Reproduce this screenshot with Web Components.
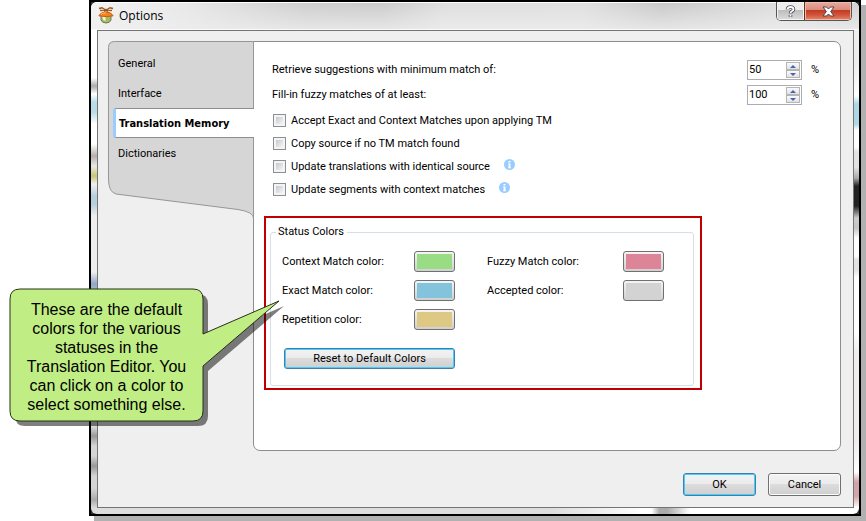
<!DOCTYPE html>
<html lang="en">
<head>
<meta charset="utf-8">
<title>Options</title>
<style>
  html { height: 100%; }
  body {
    margin: 0; min-height: 100%; display: flex; position: relative; background: #fff; color: #000;
    font: 11px/16px Roboto, "Open Sans", sans-serif;
  }
</style>
</head>
<body>
<options-window>
  <side-tabs slot="nav"></side-tabs>
  <memory-panel slot="panel"></memory-panel>
  <push-button slot="actions" primary>OK</push-button>
  <push-button slot="actions">Cancel</push-button>
</options-window>
<call-out>These are the default<br>colors for the various<br>statuses in the<br>Translation Editor. You<br>can click on a color to<br>select something else.</call-out>

<script>
const define = (name, html, setup) => customElements.define(name, class extends HTMLElement {
  connectedCallback() {
    if (this.shadowRoot) return;
    const t = document.createElement('template');
    t.innerHTML = typeof html === 'function' ? html(this) : html;
    this.attachShadow({ mode: 'open' }).append(t.content.cloneNode(true));
    if (setup) setup(this.shadowRoot, this);
  }
});

define('app-logo', `
<style>:host{display:block;width:16px;height:17px} svg{display:block}</style>
<svg width="16" height="17" viewBox="0 0 16 17" aria-hidden="true">
  <path d="M3 8.500h10v4.500q-1 3-5 3t-5-3z" fill="#a5bd58" stroke="#77746a"/>
  <path d="M4.500 9h3v5q-3-1-3-3z" fill="#f3f6df"/>
  <path d="M.8 8.800Q3 5 8 4.800q5 .2 7.200 4Q8 10.500 .8 8.800z" fill="#f58220" stroke="#c85e10"/>
  <path d="M3 7.500q2-2 5-1.700" stroke="#ffc27d" fill="none"/>
  <path d="M1 1.500l3-.7 4 2.400 4-2.400 3 .7M2 3.500l6-.3 6 .3M6 4.500l2-2 2 2" fill="none" stroke="#9a5722" stroke-width="1.300"/>
  <path d="M3 2.300l2.500.5M13 2.300l-2.500.5" stroke="#f4d9ae"/>
</svg>`);

define('options-window', `
<style>
  :host{flex:1;min-width:0;margin:0 5px 5px 89px;box-sizing:border-box;display:flex;
    border:2px solid #000;background:#333;box-shadow:5px 5px 0 #b1b1b1}
  .frame{flex:1;min-width:0;display:flex;flex-direction:column;padding:0 5px 6px 6px;border-radius:6px;
    background:
      linear-gradient(#eee 0 62px,#fff 94px,#aed6e4 102px 122px,#fff 128px 145px,#e4e2e2 150px 165px,#aaa 176px,#222 184px 204px,#ccc 216px,#c4c4c4 226px,#fff 236px 254px,#e2e2e2 258px 268px,#fff 276px 330px,#efeded 350px 440px,#fff 470px,#d3a3aa 480px 494px,#fff 506px) right/5px 100% no-repeat,
      linear-gradient(#fff 0 76px,#aaa 84px,#fff 92px,#b9dce7 100px 110px,#fff 122px 142px,#b8adad 154px,#e9e9e9 164px,#c6c673 174px,#f0f0f0 182px,#b5cfdc 194px 202px,#eee 214px 270px,#91a5c8 282px,#ddd 300px 424px,#999 434px,#d5d5d5 444px 454px,#999 464px,#d5d5d5 474px 486px,#aaa 498px,#dcdcdc 506px) left/6px 100% no-repeat,
      linear-gradient(90deg,#ddd 0 60%,#fff 72% 73%,#aaa 74% 75%,#fff 78%) bottom/100% 6px no-repeat,#eee;}
  header{display:flex;align-items:flex-start;height:28px;margin:0 -5px 0 -6px;padding:0 7px;border-radius:6px 6px 0 0;
    background:linear-gradient(#fff 0 1px,transparent 1px 27px,#fafafa 27px),
      linear-gradient(#fff0 0,#eeeeee66 50%,#eeeeeecc 100%),
      linear-gradient(100deg,#f3f3f3 0,#e8e8e8 12%,#cdcdcd 28%,#cbcbcb 38%,#dedede 46%,#dfdfdf 64%,#c8c8c8 74%,#dedede 90%,#d0d0d0)}
  app-logo{margin-top:5px}
  h1{flex:1;margin:5px 0 0 5px;font:12px/17px "Open Sans","Noto Sans",sans-serif}
  .caption{display:flex;height:18px;border:1px solid #555;border-top:0;border-radius:0 0 5px 5px;overflow:hidden}
  .caption button{margin:0;padding:0;border:0;display:grid;place-items:center}
  .help{width:27px;background:linear-gradient(#ededed 0 8px,#bcbcbc 8px,#ddd);box-shadow:inset 0 0 0 1px #f5f5f5}
  .close{width:47px;border-left:1px solid #6b2a20!important;background:linear-gradient(#e9aa9d 0,#d98b7d 8px,#bf3a22 8px,#d4543a 13px,#e08a6c);box-shadow:inset 0 0 0 1px #f0b9a9}
  .client{flex:1;display:flex;flex-direction:column;border:1px solid #747474;background:#efefef;padding:10px 12px 11px 10px}
  .body{flex:1;display:grid;grid-template-columns:146px minmax(0,1fr)}
  footer{display:flex;justify-content:flex-end;gap:12px;margin-top:22px}
</style>
<div class="frame">
  <header><app-logo></app-logo><h1>Options</h1>
    <div class="caption">
      <button class="help" aria-label="Help"><svg width="11" height="13" viewBox="0 0 11 13"><path d="M2.500 4.500Q2.500 2 5.500 2T8.500 4.500Q8.500 5.500 6.800 6.300Q5.500 7 5.500 8.500M5.500 10v1.800" fill="none" stroke="#4b4e5b" stroke-width="3.600"/><path d="M2.500 4.500Q2.500 2 5.500 2T8.500 4.500Q8.500 5.500 6.800 6.300Q5.500 7 5.500 8.300M5.500 10v1.500" fill="none" stroke="#fff" stroke-width="1.800"/></svg></button>
      <button class="close" aria-label="Close"><svg width="13" height="11" viewBox="0 0 13 11"><path d="M1 1h3.500l2 2 2-2H12L8.700 5.500 12 10H8.500l-2-2-2 2H1l3.300-4.500z" fill="#fff" stroke="#51434c"/></svg></button>
    </div>
  </header>
  <div class="client">
    <div class="body"><slot name="nav"></slot><slot name="panel"></slot></div>
    <footer><slot name="actions"></slot></footer>
  </div>
</div>`);

define('side-tabs', `
<style>
  :host{display:block;position:relative;z-index:1;align-self:start}
  svg{position:absolute;inset:0;width:100%;height:100%}
  nav{position:relative;display:flex;flex-direction:column;padding:7px 0 50px 5px}
  button{all:unset;box-sizing:border-box;height:30px;padding-left:5px;line-height:32px;cursor:pointer}
  button[aria-selected=true]{background:#fff;border:1px solid #8e8e8e;border-right:0;border-left:3px solid #99ccff;
    border-radius:3px 0 0 3px;padding-left:3px;font-family:"DejaVu Sans Condensed","DejaVu Sans",sans-serif;font-weight:bold;line-height:30px}
</style>
<svg viewBox="0 0 146 177" preserveAspectRatio="none" aria-hidden="true">
  <path d="M145.500 .5H6.500Q.5 .5 .5 6.500V138Q.5 151 8 153L130 168.500Q145.500 171 145.500 177z" fill="#d6d6d6" stroke="#969696"/>
</svg>
<nav role="tablist">
  <button role="tab">General</button><button role="tab">Interface</button>
  <button role="tab" aria-selected="true">Translation Memory</button><button role="tab">Dictionaries</button>
</nav>`);

define('spin-field', el => `
<style>
  :host{display:flex;align-items:center}
  label{flex:1}
  .box{box-sizing:border-box;display:flex;width:55px;height:20px;border:1px solid #abadb3;background:#fff}
  input{flex:1;min-width:0;border:0;padding:0 0 0 1px;margin:0;font:inherit;background:none;color:inherit;outline:0;appearance:textfield;-moz-appearance:textfield}
  input::-webkit-inner-spin-button{appearance:none;margin:0}
  .arrows{display:grid;grid-template-rows:1fr 1fr;width:14px;margin:1px}
  .arrows button{margin:0;padding:0;border:1px solid #b5b5b5;background:linear-gradient(#fafafa,#e2e2e2);display:grid;place-items:center}
  .arrows svg{display:block}
  .unit{width:11px;padding-left:9px}
</style>
<label for="n">${el.getAttribute('label')}</label>
<div class="box"><input id="n" type="number" value="${el.getAttribute('value')}">
  <div class="arrows">
    <button aria-label="Increase"><svg width="6" height="3"><path d="M0 3L3 0 6 3z" fill="#4a62b5"/></svg></button>
    <button aria-label="Decrease"><svg width="6" height="3"><path d="M0 0L3 3 6 0z" fill="#4a62b5"/></svg></button>
  </div></div>
<span class="unit">%</span>`);

define('check-field', el => `
<style>
  :host{display:flex;align-items:flex-start;height:16px}
  input{appearance:none;box-sizing:border-box;margin:1px 5px 0 1px;width:13px;height:13px;border:1px solid #8e8f8f;
    background:linear-gradient(135deg,#c5cad1,#f4f4f4) content-box,#f4f4f4;padding:2px}
  svg{margin:0 0 0 14px}
</style>
<input id="c" type="checkbox"><label for="c"><slot></slot></label>
${el.hasAttribute('info') ? '<svg width="11" height="11" viewBox="0 0 11 11" role="img" aria-label="Information"><circle cx="5.500" cy="5.500" r="5.500" fill="#99ccff"/><path d="M4.500 2h2v1.500h-2zM4 4.500h2.500v4H7v.8H4v-.8h.6V5.300H4z" fill="#fff"/></svg>' : ''}`);

define('color-field', el => `
<style>
  :host{display:flex;align-items:center;justify-content:space-between}
  input{appearance:none;box-sizing:border-box;display:block;width:41px;height:21px;margin:0;padding:1px;border:1px solid #707070;border-radius:3px;background:linear-gradient(#f5f5f5,#d0d0d0)}
  input::-webkit-color-swatch-wrapper{padding:1px}
  input::-webkit-color-swatch{border:0;border-radius:0}
</style>
<label for="c">${el.getAttribute('label')}</label><input id="c" type="color" value="${el.getAttribute('value')}">`);

define('push-button', `
<style>
  :host{display:block;width:73px}
  :host([wide]){width:171px}
  button{box-sizing:border-box;display:block;width:100%;height:23px;margin:0;padding:0;border:1px solid #707070;border-radius:3px;
    color:inherit;font:inherit;background:linear-gradient(#f3f3f3,#ebebeb 50%,#dcdcdc 50%,#cfcfcf);box-shadow:inset 0 0 0 1px #fbfbfb}
  :host([primary]) button{border-color:#3c7fb1;box-shadow:inset 0 0 0 1px #48cdf6}
  :host([wide]) button{height:21px}
</style>
<button><slot></slot></button>`);

define('status-colors', `
<style>
  :host{display:block;border:2px solid #c00000;padding:6px 6px 2px 4px}
  fieldset{min-width:0;margin:0;padding:11px 11px 16px;border:1px solid #d5dfe5;border-radius:3px}
  legend{margin-left:-6px;padding:0 3px 0 2px;line-height:16px}
  .grid{display:grid;grid-template-columns:173px 177px;gap:8px 32px}
  push-button{margin-top:18px;margin-left:2px}
</style>
<fieldset><legend>Status Colors</legend>
  <div class="grid">
    <color-field label="Context Match color:" value="#98dd84"></color-field>
    <color-field label="Fuzzy Match color:" value="#dd8499"></color-field>
    <color-field label="Exact Match color:" value="#84c3dc"></color-field>
    <color-field label="Accepted color:" value="#d3d3d3"></color-field>
    <color-field label="Repetition color:" value="#ddc884"></color-field>
  </div>
  <push-button wide primary>Reset to Default Colors</push-button>
</fieldset>`);

define('memory-panel', `
<style>
  :host{display:block;margin-left:-1px;border:1px solid #8e8e8e;border-radius:0 7px 7px 7px;background:#fff;padding:18px 10px}
  .spins{display:grid;gap:5px;margin:0 8px}
  .checks{display:grid;gap:7px;margin:8px 8px 0}
  status-colors{margin:18px 128px 0 0}
</style>
<div class="spins">
  <spin-field label="Retrieve suggestions with minimum match of:" value="50"></spin-field>
  <spin-field label="Fill-in fuzzy matches of at least:" value="100"></spin-field>
</div>
<div class="checks">
  <check-field>Accept Exact and Context Matches upon applying TM</check-field>
  <check-field>Copy source if no TM match found</check-field>
  <check-field info>Update translations with identical source</check-field>
  <check-field info>Update segments with context matches</check-field>
</div>
<status-colors></status-colors>`);

define('call-out', `
<style>
  :host{position:absolute;left:9px;top:288px;z-index:5;width:195px;font:16px/19px "Liberation Sans",Arial,sans-serif;text-align:center}
  svg{position:absolute;left:0;top:0;overflow:visible}
  p{position:relative;margin:0;padding:12px 0}
</style>
<svg width="276" height="139" viewBox="0 0 276 139" aria-hidden="true">
  <defs><path id="b" d="M11 1H184Q194 1 194 11V46L270 13 194 78V123Q194 133 184 133H11Q1 133 1 123V11Q1 1 11 1z"/></defs>
  <use href="#b" x="5" y="5" fill="#000" fill-opacity=".5"/>
  <use href="#b" fill="#c1ee84" stroke="#26301a"/>
</svg>
<p><slot></slot></p>`);
</script>
</body>
</html>
